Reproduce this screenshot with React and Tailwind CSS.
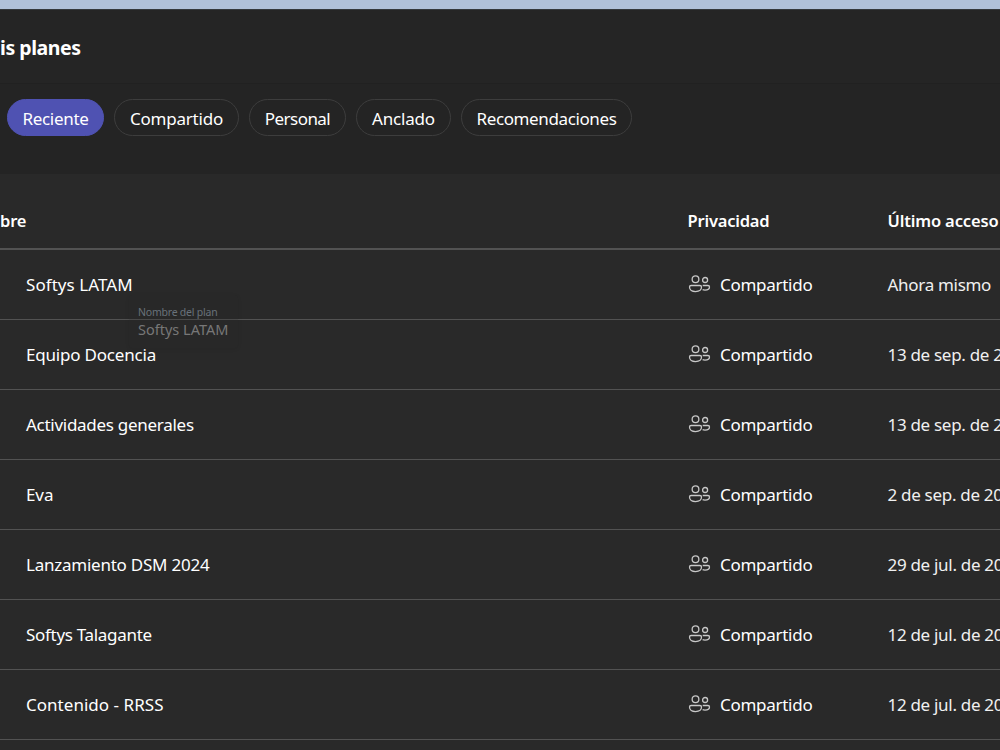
import React from "react";

const filters = [
  { label: "Reciente", width: "w-[97px]", tracking: "tracking-[-0.3px]", active: true },
  { label: "Compartido", width: "w-[125px]", tracking: "tracking-[-0.22px]" },
  { label: "Personal", width: "w-[97px]", tracking: "tracking-[-0.55px]" },
  { label: "Anclado", width: "w-[95px]", tracking: "tracking-[-0.2px]" },
  { label: "Recomendaciones", width: "w-[171px]", tracking: "tracking-[-0.38px]" },
];

const plans = [
  { name: "Softys LATAM", tracking: "tracking-[0.06px]", date: "Ahora mismo" },
  { name: "Equipo Docencia", tracking: "tracking-[-0.2px]", date: "13 de sep. de 2024" },
  { name: "Actividades generales", tracking: "tracking-[-0.28px]", date: "13 de sep. de 2024" },
  { name: "Eva", tracking: "tracking-[-0.1px]", date: "2 de sep. de 2024" },
  { name: "Lanzamiento DSM 2024", tracking: "tracking-[-0.24px]", date: "29 de jul. de 2024" },
  { name: "Softys Talagante", tracking: "tracking-[-0.3px]", date: "12 de jul. de 2024" },
  { name: "Contenido - RRSS", tracking: "tracking-[0.03px]", date: "12 de jul. de 2024" },
];

function PeopleIcon() {
  return (
    <svg className="mr-[9px] -mt-px h-[18px] w-[23px] shrink-0" viewBox="0 0 23 18" fill="none" stroke="#c8c8c8" strokeWidth="1.3">
      <circle cx="7.5" cy="4.2" r="3.35" />
      <circle cx="17.100" cy="5" r="2.5" />
      <path d="M3.200 10.500h8.700c.9 0 1.600.7 1.600 1.600 0 2.900-2.600 4.500-6 4.500s-6-1.600-6-4.500c0-.9.7-1.600 1.700-1.600Z" />
      <path d="M14.700 10.500h5.200c.9 0 1.600.7 1.600 1.500 0 2.100-2 3.100-4.500 3.100-.9 0-1.700-.1-2.400-.4" />
    </svg>
  );
}

export default function App() {
  return (
    <div className="flex h-[750px] w-[1000px] flex-col overflow-hidden bg-[#292929] font-['Noto_Sans',sans-serif] text-[17px] leading-6 text-white">
      <div className="h-[9px] shrink-0 bg-[#b0c1da]" />
      <header className="flex h-[74px] shrink-0 items-center border-t border-[#35393e] bg-[#252525] pt-[3px]">
        <h1 className="whitespace-nowrap text-[19.5px] font-bold tracking-[-0.45px]">is planes</h1>
      </header>
      <nav className="flex h-[91px] shrink-0 gap-[10px] border-t border-[#212121] bg-[#242424] pl-[7px] pt-[15px]">
        {filters.map((f) => (
          <button
            key={f.label}
            className={`flex h-[37px] shrink-0 items-center justify-center whitespace-nowrap rounded-full border pt-[2px] ${f.width} ${f.tracking} ${
              f.active ? "border-[#4f52b2] bg-[#4f52b2]" : "border-[#3d3d3d]"
            }`}
          >
            {f.label}
          </button>
        ))}
      </nav>
      <main className="relative flex flex-col">
        <div className="flex h-[76px] shrink-0 items-center whitespace-nowrap border-b-2 border-[#525252] pt-[20px] text-[16.5px] font-semibold tracking-[-0.2px]">
          <span className="w-[687.5px] shrink-0">bre</span>
          <span className="w-[200px] shrink-0">Privacidad</span>
          <span className="shrink-0 tracking-[-0.15px]">Último acceso</span>
        </div>
        {plans.map((p) => (
          <div key={p.name} className="flex h-[70px] shrink-0 items-center whitespace-nowrap border-b border-[#525252]">
            <span className={`w-[688px] shrink-0 pl-[26px] ${p.tracking}`}>{p.name}</span>
            <span className="flex w-[199.5px] shrink-0 items-center">
              <PeopleIcon />
              <span className="tracking-[-0.28px]">Compartido</span>
            </span>
            <span className="shrink-0 tracking-[-0.3px] text-[#f0f0f0]">{p.date}</span>
          </div>
        ))}
        <div className="absolute left-[129px] top-[121px] flex h-[53px] w-[109px] flex-col rounded-sm bg-[#292929]/20 pl-[9px] pt-[10px] text-[#777777] shadow-[0_1px_4px_rgba(0,0,0,0.08)]">
          <span className="whitespace-nowrap text-[10.5px] leading-[14px] tracking-[-0.22px] text-[#69727a]">Nombre del plan</span>
          <span className="whitespace-nowrap text-[14.5px] leading-[21px]">Softys LATAM</span>
        </div>
      </main>
    </div>
  );
}
